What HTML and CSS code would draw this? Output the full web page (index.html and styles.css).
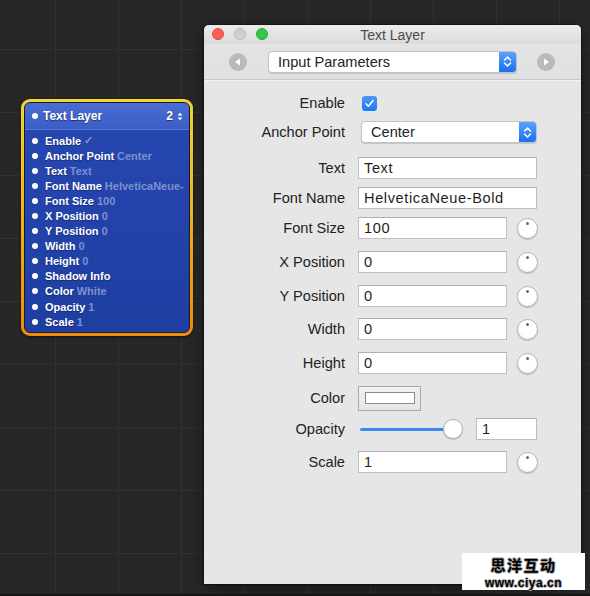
FILE: index.html
```html
<!DOCTYPE html>
<html>
<head>
<meta charset="utf-8">
<link rel="stylesheet" href="styles.css">
</head>
<body>
<div class="canvas">
  <div class="node">
    <div class="node-inner">
      <div class="node-head">
        <span class="dot"></span>
        <span class="node-title">Text Layer</span>
        <span class="node-count">2</span>
        <svg class="node-arrows" width="6" height="9" viewBox="0 0 6 9"><path d="M0.5 3.5 L3 0.8 L5.5 3.5 Z M0.5 5.5 L3 8.2 L5.5 5.5 Z" fill="#fff"/></svg>
      </div>
      <ul class="ports">
        <li><span class="dot"></span><b>Enable</b><span class="val">✓</span></li>
        <li><span class="dot"></span><b>Anchor Point</b><span class="val">Center</span></li>
        <li><span class="dot"></span><b>Text</b><span class="val">Text</span></li>
        <li><span class="dot"></span><b>Font Name</b><span class="val">HelveticaNeue-</span></li>
        <li><span class="dot"></span><b>Font Size</b><span class="val">100</span></li>
        <li><span class="dot"></span><b>X Position</b><span class="val">0</span></li>
        <li><span class="dot"></span><b>Y Position</b><span class="val">0</span></li>
        <li><span class="dot"></span><b>Width</b><span class="val">0</span></li>
        <li><span class="dot"></span><b>Height</b><span class="val">0</span></li>
        <li><span class="dot"></span><b>Shadow Info</b></li>
        <li><span class="dot"></span><b>Color</b><span class="val">White</span></li>
        <li><span class="dot"></span><b>Opacity</b><span class="val">1</span></li>
        <li><span class="dot"></span><b>Scale</b><span class="val">1</span></li>
      </ul>
    </div>
  </div>

  <div class="window">
    <div class="titlebar">
      <div class="lights">
        <span class="light red"></span>
        <span class="light gray"></span>
        <span class="light green"></span>
      </div>
      <div class="win-title">Text Layer</div>
    </div>
    <div class="toolbar">
      <span class="navbtn"><svg width="18" height="18" viewBox="0 0 18 18"><path d="M6 9 L11 5.5 L11 12.5 Z" fill="#fff"/></svg></span>
      <div class="popup wide">
        <span class="popup-text">Input Parameters</span>
        <span class="stepper"><svg width="9" height="13" viewBox="0 0 9 13"><path d="M1.5 5 L4.5 2 L7.5 5 M1.5 8 L4.5 11 L7.5 8" fill="none" stroke="#fff" stroke-width="1.5" stroke-linecap="round" stroke-linejoin="round"/></svg></span>
      </div>
      <span class="navbtn"><svg width="18" height="18" viewBox="0 0 18 18"><path d="M12 9 L7 5.5 L7 12.5 Z" fill="#fff"/></svg></span>
    </div>
    <div class="form">
      <div class="row r-first">
        <label class="lbl">Enable</label>
        <span class="check"><svg width="15" height="15" viewBox="0 0 15 15"><path d="M4 7.8 L6.4 10.2 L11 4.6" fill="none" stroke="#fff" stroke-width="1.6" stroke-linecap="round" stroke-linejoin="round"/></svg></span>
      </div>
      <div class="row r-7">
        <label class="lbl">Anchor Point</label>
        <div class="popup anchor">
          <span class="popup-text">Center</span>
          <span class="stepper"><svg width="9" height="13" viewBox="0 0 9 13"><path d="M1.5 5 L4.5 2 L7.5 5 M1.5 8 L4.5 11 L7.5 8" fill="none" stroke="#fff" stroke-width="1.5" stroke-linecap="round" stroke-linejoin="round"/></svg></span>
        </div>
      </div>
      <div class="row r-14">
        <label class="lbl">Text</label>
        <span class="field full">Text</span>
      </div>
      <div class="row r-8">
        <label class="lbl">Font Name</label>
        <span class="field full">HelveticaNeue-Bold</span>
      </div>
      <div class="row r-8">
        <label class="lbl">Font Size</label>
        <span class="field short">100</span>
        <span class="knob"></span>
      </div>
      <div class="row r-12">
        <label class="lbl">X Position</label>
        <span class="field short">0</span>
        <span class="knob"></span>
      </div>
      <div class="row r-12">
        <label class="lbl">Y Position</label>
        <span class="field short">0</span>
        <span class="knob"></span>
      </div>
      <div class="row r-11">
        <label class="lbl">Width</label>
        <span class="field short">0</span>
        <span class="knob"></span>
      </div>
      <div class="row r-12">
        <label class="lbl">Height</label>
        <span class="field short">0</span>
        <span class="knob"></span>
      </div>
      <div class="row r-13">
        <label class="lbl">Color</label>
        <span class="well"><span class="swatch"></span></span>
      </div>
      <div class="row r-9">
        <label class="lbl">Opacity</label>
        <span class="slider"><span class="track"></span><span class="thumb"></span></span>
        <span class="field tiny">1</span>
      </div>
      <div class="row r-11">
        <label class="lbl">Scale</label>
        <span class="field short">1</span>
        <span class="knob"></span>
      </div>
    </div>
  </div>

  <div class="watermark">
    <div class="wm-cn">思洋互动</div>
    <div class="wm-en">www.ciya.cn</div>
  </div>
  <div class="bottom-strip"></div>
</div>
</body>
</html>
```

FILE: styles.css
```css
html, body {
  margin: 0;
  padding: 0;
}
body {
  width: 590px;
  height: 596px;
  overflow: hidden;
  background: #272727;
  font-family: "Liberation Sans", Arial, sans-serif;
}
.canvas {
  position: relative;
  width: 590px;
  height: 596px;
  background-color: #272727;
  background-image:
    linear-gradient(to right, #313131 1px, transparent 1px),
    linear-gradient(to bottom, #313131 1px, transparent 1px);
  background-size: 63px 63px;
  background-position: 55px 49px;
}
.bottom-strip {
  position: absolute;
  left: 0;
  right: 0;
  bottom: 0;
  height: 2px;
  background: #151515;
}

/* ---------- node ---------- */
.node {
  position: absolute;
  left: 21px;
  top: 99px;
  width: 172px;
  padding: 3px;
  box-sizing: border-box;
  border-radius: 9px;
  background: linear-gradient(to bottom, #f3d632 0%, #f2b21c 50%, #f08c08 100%);
  box-shadow: 0 1px 3px rgba(0,0,0,0.6);
}
.node-inner {
  border: 1px solid #151a3a;
  border-radius: 6px;
  overflow: hidden;
  background: linear-gradient(to bottom, #2748b2, #1f3ea2);
}
.node-head {
  display: flex;
  align-items: center;
  height: 26px;
  padding: 0 6px 0 7px;
  background: linear-gradient(to bottom, #4a6cd2, #3a5ec6);
  border-bottom: 1px solid #5a78d6;
  color: #fff;
}
.node-title {
  font-weight: bold;
  font-size: 12px;
  margin-left: 5px;
  flex: 1;
  text-shadow: 0 1px 1px rgba(0,0,0,0.5);
}
.node-count {
  font-weight: bold;
  font-size: 12px;
  text-shadow: 0 1px 1px rgba(0,0,0,0.5);
  margin-right: 4px;
}
.node-arrows {
  display: block;
}
.dot {
  display: inline-block;
  width: 6px;
  height: 6px;
  border-radius: 50%;
  background: #fff;
  flex: none;
}
.ports {
  list-style: none;
  margin: 0;
  padding: 3px 0 3px 7px;
}
.ports li {
  display: flex;
  align-items: center;
  height: 15.1px;
  font-size: 11px;
  color: #fff;
  white-space: nowrap;
  overflow: hidden;
}
.ports li .dot {
  margin-right: 7px;
}
.ports b {
  font-weight: bold;
  text-shadow: 0 1px 1px rgba(0,0,0,0.35);
}
.ports .val {
  margin-left: 3px;
  font-weight: bold;
  color: #7c90d0;
}

/* ---------- window ---------- */
.window {
  position: absolute;
  left: 204px;
  top: 25px;
  width: 377px;
  height: 559px;
  background: #e6e6e6;
  border-radius: 5px 5px 0 0;
  box-shadow: 0 0 0 1px rgba(0,0,0,0.35), 0 4px 14px rgba(0,0,0,0.5);
  font-size: 14.6px;
  color: #222;
}
.titlebar {
  position: relative;
  height: 19px;
  border-radius: 5px 5px 0 0;
  background: linear-gradient(to bottom, #ecebec, #dcdadc);
  display: flex;
  align-items: center;
  justify-content: center;
}
.lights {
  position: absolute;
  left: 8px;
  top: 3px;
  display: flex;
  gap: 10px;
}
.light {
  width: 12px;
  height: 12px;
  border-radius: 50%;
  box-sizing: border-box;
}
.light.red { background: #fc605b; border: 1px solid #de4841; }
.light.gray { background: #d0d0d0; border: 1px solid #bdbdbd; }
.light.green { background: #34c84a; border: 1px solid #27aa36; }
.win-title {
  font-size: 14px;
  color: #4b4b4b;
}
.toolbar {
  height: 36px;
  box-sizing: border-box;
  background: linear-gradient(to bottom, #e3e3e3, #e1e1e1);
  border-bottom: 1px solid #c8c8c8;
  box-shadow: 0 1px 0 #f2f2f2;
  display: flex;
  align-items: center;
  padding-left: 25px;
}
.navbtn {
  width: 18px;
  height: 18px;
  border-radius: 50%;
  background: #bababa;
  display: block;
  flex: none;
}
.navbtn svg { display: block; }
.popup {
  display: flex;
  align-items: stretch;
  height: 22px;
  box-sizing: border-box;
  background: #fff;
  border: 1px solid #c3c3c3;
  border-radius: 4px;
  box-shadow: 0 1px 1px rgba(0,0,0,0.15);
  overflow: hidden;
}
.popup.wide {
  width: 249px;
  margin: 0 20px 0 21px;
}
.popup.anchor {
  width: 176px;
  margin-left: 3px;
}
.popup-text {
  flex: 1;
  display: flex;
  align-items: center;
  padding-left: 9px;
  color: #222;
}
.stepper {
  width: 17px;
  background: linear-gradient(to bottom, #5aa2fb, #1c70f0);
  display: flex;
  align-items: center;
  justify-content: center;
}
.stepper svg { display: block; }

.form {
  display: flex;
  flex-direction: column;
  padding-top: 12px;
}
.row {
  display: flex;
  align-items: center;
  height: 22px;
}
.r-7 { margin-top: 7px; }
.r-8 { margin-top: 8px; }
.r-9 { margin-top: 9px; }
.r-11 { margin-top: 11px; }
.r-12 { margin-top: 12px; }
.r-13 { margin-top: 13px; }
.r-14 { margin-top: 14px; }
.lbl {
  width: 141px;
  margin-right: 13px;
  text-align: right;
  flex: none;
  color: #222;
}
.check {
  width: 15px;
  height: 15px;
  margin-left: 4px;
  border-radius: 3px;
  background: linear-gradient(to bottom, #4b97fa, #2176f2);
  display: block;
}
.check svg { display: block; }
.field {
  height: 22px;
  box-sizing: border-box;
  background: #fff;
  border: 1px solid #bfbfbf;
  border-top-color: #b0b0b0;
  display: flex;
  align-items: center;
  padding-left: 5px;
  color: #1e1e1e;
  flex: none;
  letter-spacing: 0.6px;
}
.field.full { width: 179px; }
.field.short { width: 149px; }
.field.tiny { width: 61px; margin-left: 10px; }
.knob {
  width: 21px;
  height: 21px;
  margin-left: 10px;
  box-sizing: border-box;
  border-radius: 50%;
  border: 1px solid #b4b4b4;
  background: radial-gradient(circle at 50% 35%, #ffffff 55%, #f1f1f1 100%);
  box-shadow: 0 1px 1px rgba(0,0,0,0.2);
  position: relative;
  flex: none;
}
.knob::after {
  content: "";
  position: absolute;
  left: 8px;
  top: 3px;
  width: 3px;
  height: 3px;
  border-radius: 50%;
  background: #6a6a6a;
}
.well {
  width: 63px;
  height: 25px;
  box-sizing: border-box;
  border: 1px solid #a9a9a9;
  background: linear-gradient(to bottom, #f0f0f0, #e6e6e6);
  display: flex;
  align-items: center;
  justify-content: center;
  flex: none;
}
.swatch {
  width: 50px;
  height: 12px;
  box-sizing: border-box;
  background: #fff;
  border: 1px solid #8a8a8a;
}
.slider {
  position: relative;
  width: 108px;
  height: 22px;
  flex: none;
}
.track {
  position: absolute;
  left: 2px;
  top: 10px;
  width: 92px;
  height: 3px;
  border-radius: 2px;
  background: #3a88f6;
}
.thumb {
  position: absolute;
  left: 85px;
  top: 1px;
  width: 20px;
  height: 20px;
  box-sizing: border-box;
  border-radius: 50%;
  border: 1px solid #b0b0b0;
  background: #fff;
  box-shadow: 0 1px 1px rgba(0,0,0,0.2);
}

/* ---------- watermark ---------- */
.watermark {
  position: absolute;
  left: 462px;
  top: 553px;
  width: 123px;
  height: 37px;
  background: #fff;
  display: flex;
  flex-direction: column;
  align-items: center;
  justify-content: center;
}
.wm-cn {
  font-family: "Noto Sans CJK SC", sans-serif;
  font-weight: bold;
  font-size: 15px;
  line-height: 22px;
  height: 22px;
  letter-spacing: 1.5px;
  color: #000;
  text-shadow: 1px 0 #999, -1px 0 #999, 0 1px #999, 0 -1px #999;
}
.wm-en {
  font-family: "Liberation Sans", Arial, sans-serif;
  font-weight: bold;
  font-size: 12px;
  line-height: 14px;
  height: 14px;
  letter-spacing: 0.5px;
  color: #000;
  text-shadow: 1px 0 #aaa, -1px 0 #aaa, 0 1px #aaa, 0 -1px #aaa;
}
```
